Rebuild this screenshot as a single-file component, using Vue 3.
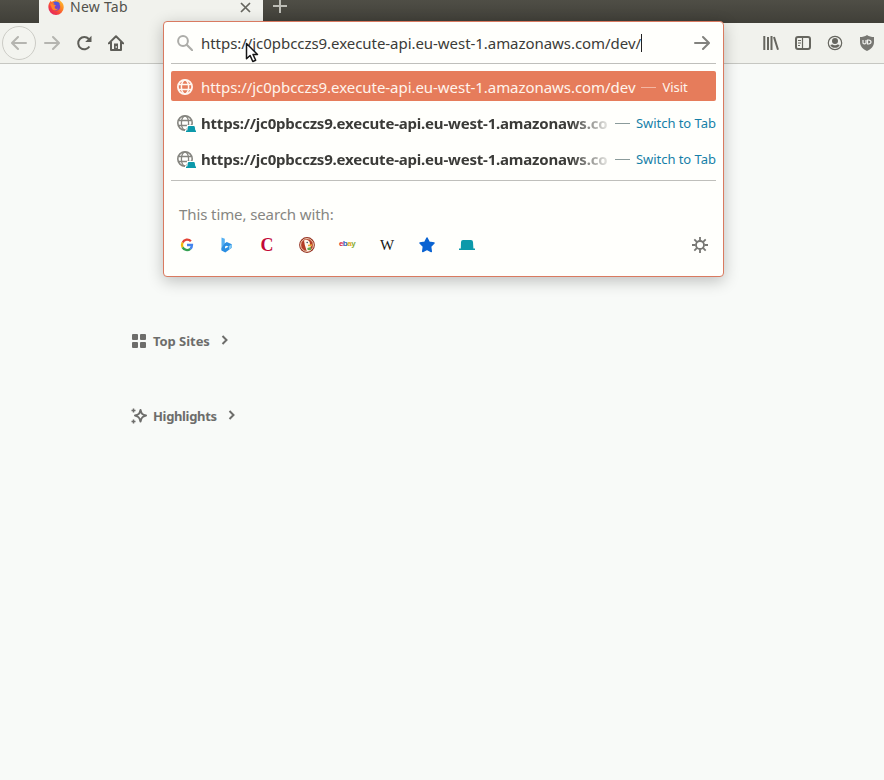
<script setup>
const url = 'https://jc0pbcczs9.execute-api.eu-west-1.amazonaws.com/dev'
const openUrl = 'https://jc0pbcczs9.execute-api.eu-west-1.amazonaws.co'
const tabs = [1, 2]
</script>

<template>
  <div class="browser">
    <header class="tabs">
      <div class="tab">
        <svg class="fox" width="16" height="16" viewBox="0 0 16 16">
          <defs>
            <linearGradient id="fx" x1="1" y1="0" x2="0.2" y2="1">
              <stop offset="0" stop-color="#ffd53d" /><stop offset=".4" stop-color="#ff8b22" /><stop offset=".75" stop-color="#f43b42" /><stop offset="1" stop-color="#dd2768" />
            </linearGradient>
          </defs>
          <path fill="url(#fx)" d="M.4 8.400C.2 6 1 4 2 3l.7-1.500.9 1.400C4.500 2.200 5.500 2 6 2L7 .8l1.500.7L11 0c.3 1 1 1.500 2 2.500C15 4 15.800 6 15.700 8.500A7.600 7.500 0 0 1 .4 8.400z" />
          <path fill="#7543c9" d="M4.500 7.200C5 4.500 7 3.500 9.400 4c2 .6 3 2 2.800 4.200A4 4 0 0 1 4.500 9z" />
          <path fill="#4c57dc" d="M5 3.500c2-1.600 5.500-1.300 6.800 1.200L10 7z" />
          <path fill="#ff8428" d="M2 4.500l4 .9L8 6.500 6.600 7.700l.3 1.500c1 1 2 .7 3.100.4-.8 2-4.500 2.300-6 .1z" />
        </svg>
        <span class="tab-title">New Tab</span>
        <svg class="tab-close" width="11" height="11" viewBox="0 0 11 11"><path d="M1 1l9 9M10 1l-9 9" fill="none" stroke="#66665f" stroke-width="1.700" /></svg>
      </div>
      <svg class="plus" width="16" height="16" viewBox="0 0 16 16"><path d="M8 1v14M1 8h14" stroke="#bdbdb6" stroke-width="2" /></svg>
    </header>

    <nav class="toolbar">
      <div class="nav-left">
        <div class="back"><svg width="16" height="16" viewBox="0 0 16 16"><path d="M15 8H1.500M7 2L1 8l6 6" class="line faint" /></svg></div>
        <svg class="i" width="16" height="16" viewBox="0 0 16 16"><path d="M1 8h13.500M9 2l6 6-6 6" class="line faint" /></svg>
        <svg class="i" width="16" height="16" viewBox="0 0 16 16"><path d="M13.400 11.500A6.100 6.100 0 1 1 12.800 4L14 5.500" fill="none" stroke="#5e5e58" stroke-width="2" /><path d="M15.500.8V7H9.200z" fill="#5e5e58" /></svg>
        <svg class="i" width="16" height="16" viewBox="0 0 16 16"><path d="M.8 8.400L8 1.300l7.200 7.100M3 7v8h10V7" fill="none" stroke="#5e5e58" stroke-width="2" stroke-linejoin="round" stroke-linecap="round" /><path d="M6 15V8.500h4V15" fill="#5e5e58" /><path d="M7.700 11h1v2h-1z" fill="#eee" /></svg>
      </div>
      <div class="nav-right">
        <svg width="16" height="16" viewBox="0 0 16 16"><path d="M1.300 1v14M5 2v13M8.500 1v14M11 2l4 12.800" stroke="#66665f" stroke-width="2" fill="none" /></svg>
        <svg width="16" height="16" viewBox="0 0 16 16"><rect x="1" y="2" width="14" height="12" rx="2" fill="none" stroke="#66665f" stroke-width="2" /><path d="M7.500 2v12" stroke="#66665f" stroke-width="1.200" /><path d="M3 5.500h3M3 8h3M3 10.500h2" stroke="#66665f" /></svg>
        <svg width="16" height="16" viewBox="0 0 16 16"><circle cx="8" cy="8" r="6.700" fill="none" stroke="#66665f" stroke-width="1.200" /><circle cx="8" cy="6" r="3" fill="#66665f" /><path d="M3.300 10c1.200-.7 2-.7 2.700-.3 1.300.7 2.700.7 4 0 .7-.4 1.500-.4 2.700.3-1.500 3.800-7.900 3.800-9.400 0z" fill="#66665f" /></svg>
        <svg width="16" height="16" viewBox="0 0 16 16"><path d="M8 0c2 1.500 4.500 2 7 2v5c0 4.500-3 7-7 9-4-2-7-4.500-7-9V2c2.500 0 5-.5 7-2z" fill="#777772" /><path d="M4 5v3.200q1.500 1.500 3 0V5M8.500 5v4h1q2.500-.2 2.500-2t-2.500-2z" fill="none" stroke="#f1f1ee" stroke-width="1.200" /></svg>
      </div>
    </nav>

    <main class="page">
      <section class="section">
        <svg width="16" height="16" viewBox="0 0 16 16"><g fill="#6d6d6b"><rect x="1" y="1" width="6" height="6" rx="1" /><rect x="9" y="1" width="6" height="6" rx="1" /><rect x="1" y="9" width="6" height="6" rx="1" /><rect x="9" y="9" width="6" height="6" rx="1" /></g></svg>
        <h2 class="top-title">Top Sites</h2>
        <svg class="chev" width="8" height="10" viewBox="0 0 8 10"><path d="M1.500 1l4 4-4 4" class="chevline" /></svg>
      </section>
      <section class="section">
        <svg width="16" height="16" viewBox="0 0 16 16"><path d="M9.500 2c.8 3.700 1.800 4.700 5.500 5.500-3.700.8-4.700 2.300-5.500 6-.8-3.700-1.800-5.200-5.500-6 3.700-.8 4.700-1.800 5.500-5.500z" fill="none" stroke="#6d6d6b" stroke-width="2" stroke-linejoin="round" /><path d="M2.500 .5v4M.5 2.500h4M2.500 11.500v4M.5 13.500h4" stroke="#6d6d6b" stroke-width="1.500" /></svg>
        <h2 class="high-title">Highlights</h2>
        <svg class="chev" width="8" height="10" viewBox="0 0 8 10"><path d="M1.500 1l4 4-4 4" class="chevline" /></svg>
      </section>
    </main>

    <div class="popup">
      <div class="inputrow">
        <svg width="16" height="16" viewBox="0 0 16 16"><circle cx="6" cy="6" r="4.900" fill="none" stroke="#adada9" stroke-width="2" /><path d="M9.700 9.700l5.500 5.500" stroke="#adada9" stroke-width="2.200" stroke-linecap="round" /></svg>
        <span class="url typed">{{ url }}/</span><span class="caret"></span>
        <svg class="go" width="16" height="16" viewBox="0 0 16 16"><path d="M1 8h13.500M9 2l6 6-6 6" class="line" /></svg>
      </div>

      <div class="results">
        <div class="result selected">
          <svg width="16" height="16" viewBox="0 0 16 16"><g fill="none" stroke="#fff6f0" stroke-width="1.500"><circle cx="8" cy="8" r="7.100" stroke-width="1.800" /><ellipse cx="8" cy="8" rx="3.600" ry="7" /><path d="M1.500 5.500h13M1.500 10.500h13" /></g></svg>
          <span class="url chosen">{{ url }}</span>
          <span class="dash"></span>
          <span class="action visit">Visit</span>
        </div>
        <div v-for="t in tabs" :key="t" class="result">
          <svg class="globe" width="20" height="18" viewBox="0 0 20 18"><g fill="none" stroke="#85857f" stroke-width="1.300"><circle cx="8" cy="8" r="7.200" stroke-width="1.600" /><ellipse cx="8" cy="8" rx="3.600" ry="7" /><path d="M1.500 5.500h13M1.500 10.500h13" /></g><path d="M8 17v-2.500h1.500L10 10h9v7z" fill="#fffffc" /><path d="M9 17v-1.600h1.300l.5-3.400q.2-1 1-1h5q.8 0 1 1l.5 3.400H19V17z" fill="#0c99aa" /></svg>
          <span class="url bold">{{ openUrl }}</span>
          <span class="dash"></span>
          <span class="action switch">Switch to Tab</span>
        </div>
      </div>

      <div class="oneoff">
        <div class="label"><span>This time, search with:</span></div>
        <div class="engines">
          <svg width="16" height="16" viewBox="0 0 16 16"><g fill="none" stroke-width="2.300"><path d="M11.900 4.300A5 5 0 0 0 3.600 5.600" stroke="#e34335" /><path d="M3.600 5.600a5 5 0 0 0 0 4.800" stroke="#f2b90b" /><path d="M3.600 10.400a5 5 0 0 0 7.700 1.400" stroke="#34a052" /><path d="M11.300 11.800A5 5 0 0 0 13 8H8" stroke="#4384ed" /></g></svg>
          <svg width="16" height="16" viewBox="0 0 16 16"><path d="M2.500.5l3.300 1.200v9.500L3.800 14l-1.300-1z" fill="#55b0f2" /><path fill-rule="evenodd" d="M2.500 11l3.300-4.700 2-1.300 5 2.200v3.600l-6.500 4.700-3.800-2zM6 9.500v2l3.500-1.800-1.800-1z" fill="#2b8ee2" /><path d="M10 9l2.800-1.800v3.600L10 12.500z" fill="#82c9f4" /></svg>
          <span class="glyph c-logo">C</span>
          <svg width="16" height="16" viewBox="0 0 16 16"><circle cx="8" cy="8" r="7.900" fill="#963323" /><circle cx="8" cy="8" r="6.400" fill="#b33c26" stroke="#f5d9bd" stroke-width="1" /><path d="M5 3.500C7 1.900 10 3 10.800 5.500L11 8l2 .5-1.800 1.500.8 3q-3 1.800-4.500.4L5.800 8z" fill="#fff7eb" /><circle cx="8.200" cy="5.500" r=".8" fill="#37536a" /><path d="M9 7.800l4.500-.5-1.200 2H9z" fill="#eda831" /><path d="M8.300 11l3.500-1 .3 3-3.400-.1z" fill="#5fa84c" /></svg>
          <span class="ebay"><b class="e1">e</b><b class="e2">b</b><b class="e3">a</b><b class="e4">y</b></span>
          <span class="glyph wiki">W</span>
          <svg width="16" height="16" viewBox="0 0 16 16"><path d="M8 1l2.200 4.300 4.800.8-3.400 3.500.7 4.900L8 12.300l-4.300 2.200.7-4.900L1 6.100l4.800-.8z" fill="#0a63d2" stroke="#0a63d2" stroke-width="1.500" stroke-linejoin="round" /></svg>
          <svg width="16" height="16" viewBox="0 0 16 16"><path d="M0 13v-1.500h1.800L2 5q.1-2 2-2h8q1.900 0 2 2l.4 6.500H16V13z" fill="#0c99aa" /></svg>
          <svg class="gear" width="16" height="16" viewBox="0 0 16 16"><circle cx="8" cy="8" r="4" fill="none" stroke="#777773" stroke-width="1.800" /><path d="M8 0v3.500M8 12.500V16M0 8h3.500M12.500 8H16M2.300 2.300l2.500 2.500M11.200 11.200l2.500 2.500M13.700 2.300l-2.500 2.500M4.800 11.200l-2.500 2.500" stroke="#777773" stroke-width="1.800" /></svg>
        </div>
      </div>
    </div>

    <svg class="cursor" width="14" height="22" viewBox="0 0 14 22"><path d="M1.500 1.500v15.300l3.600-3.300 2.700 6 2.900-1.300L8 12.500h4.500z" fill="#fff" stroke="#161616" stroke-width="1.500" stroke-linejoin="round" /></svg>
  </div>
</template>

<style>
body { margin: 0; background: #f8faf8; overflow: hidden; }
</style>

<style scoped>
.browser { position: relative; height: 780px; overflow: hidden; background: #f8faf8; font-family: "Noto Sans", "Open Sans", sans-serif; color: #3b3b38; }
svg { display: block; flex: none; }
.line { fill: none; stroke: #82827e; stroke-width: 2; stroke-linecap: round; stroke-linejoin: round; }
.faint { stroke: #b5b5b0; }
.tabs { height: 23px; display: flex; box-sizing: border-box; padding-left: 39px; background: linear-gradient(#4f4e46, #403f38); }
.tab { width: 224px; height: 23px; background: #f1f2ed; display: flex; align-items: flex-start; box-sizing: border-box; padding: 0 12px 0 9px; }
.fox { margin-top: -1px; }
.tab-title { margin-left: 6px; margin-top: -3px; font-size: 14px; line-height: 20px; letter-spacing: .25px; color: #51514c; }
.tab-close { margin-left: auto; margin-top: 2px; }
.plus { margin: -2px 0 0 9px; }
.toolbar { height: 41px; box-sizing: border-box; border-bottom: 1px solid #c6c7c2; background: #f1f2ed; display: flex; align-items: center; justify-content: space-between; padding: 0 9px 0 2px; }
.nav-left { display: flex; align-items: center; }
.back { width: 32px; height: 32px; border: 1px solid #ccccc6; border-radius: 50%; display: flex; align-items: center; justify-content: center; background: #f3f4ef; margin-right: 8px; }
.i { margin-right: 16px; }
.nav-right { display: flex; gap: 16px; }
.page { padding: 269px 0 0 131px; }
.section { display: flex; align-items: center; height: 16px; margin-bottom: 59px; color: #6d6d6b; }
.section h2 { margin: 0 0 0 6px; font-size: 13px; line-height: 16px; font-weight: 700; }
.top-title { letter-spacing: -.05px; }
.high-title { letter-spacing: -.35px; }
.chev { margin: -2px 0 0 11px; }
.chevline { fill: none; stroke: #6d6d6b; stroke-width: 2; }
.popup { position: absolute; left: 163px; top: 21px; width: 561px; height: 256px; box-sizing: border-box; border: 1px solid #d97a60; border-radius: 4px; background: #fffffc; padding: 0 7px; box-shadow: 0 4px 16px rgba(0, 0, 0, .24); }
.inputrow { height: 41px; border-bottom: 1px solid #bfbfbb; display: flex; align-items: center; padding: 0 6px; }
.url { white-space: nowrap; font-size: 15px; line-height: 20px; letter-spacing: -.05px; }
.typed { margin-left: 8px; }
.caret { width: 1px; height: 18px; background: #222; }
.go { margin-left: auto; }
.results { padding: 7px 0; border-bottom: 1px solid #bfbfbb; display: flex; flex-direction: column; gap: 6px; }
.result { height: 30px; box-sizing: border-box; border-radius: 2px; display: flex; align-items: center; padding: 2px 0 0 6px; }
.globe { margin-top: 2px; }
.selected { background: #e67c5b; color: #fff4ec; }
.chosen { margin-left: 8px; }
.bold { flex: none; width: 408px; margin-left: 4px; overflow: hidden; font-weight: 700; letter-spacing: -.2px; mask-image: linear-gradient(to right, #000 370px, transparent 412px); }
.dash { flex: none; width: 15px; height: 1px; margin-left: 6px; background: #8b9b9b; }
.selected .dash { background: #f4b6a2; }
.action { white-space: nowrap; margin-left: 6px; font-size: 13px; line-height: 18px; letter-spacing: -.05px; }
.switch { color: #167fa8; }
.oneoff { padding: 24px 8px 0; }
.label { font-size: 15px; line-height: 18px; letter-spacing: -.1px; color: #868682; }
.engines { display: flex; align-items: center; height: 16px; gap: 24px; margin-top: 14px; }
.glyph { width: 16px; height: 16px; text-align: center; line-height: 16px; font-family: "Liberation Serif", serif; }
.c-logo { color: #c30936; font-size: 18px; font-weight: 700; }
.wiki { color: #161616; font-size: 15px; }
.ebay { width: 16px; height: 16px; display: flex; justify-content: center; font: 700 8px/14px "Liberation Sans", sans-serif; letter-spacing: -.5px; }
.e1 { color: #d82937; } .e2 { color: #345ab5; } .e3 { color: #e5ac20; } .e4 { color: #83ad33; }
.gear { margin-left: auto; }
.cursor { position: absolute; left: 245px; top: 42px; }
</style>
